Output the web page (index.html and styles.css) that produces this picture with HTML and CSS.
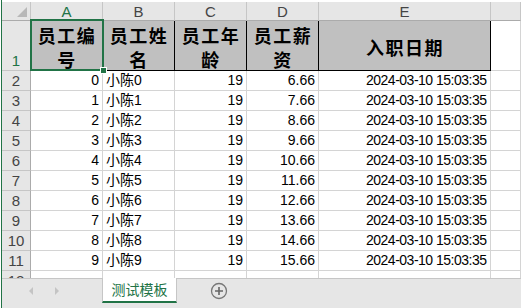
FILE: index.html
```html
<!DOCTYPE html>
<html lang="zh-CN">

<head>
    <meta charset="UTF-8">
    <meta name="viewport" content="width=device-width, initial-scale=1.0">
    <title>测试模板</title>

    <link rel="stylesheet" href="styles.css">
</head>

<body>

    <div class="app">
        <div class="sheet">
            <div class="corner"><span class="tri"></span></div>
            <div class="colhead active">A</div>
            <div class="colhead">B</div>
            <div class="colhead">C</div>
            <div class="colhead">D</div>
            <div class="colhead">E</div>
            <div class="colhead"></div>

            <div class="rowhead active bottom">1</div>
            <div class="cell title">员工编号</div>
            <div class="cell title">员工姓名</div>
            <div class="cell title">员工年龄</div>
            <div class="cell title">员工薪资</div>
            <div class="cell title single">入职日期</div>
            <div class="cell"></div>

            <div class="rowhead">2</div>
            <div class="cell num">0</div><div class="cell">小陈0</div><div class="cell num">19</div><div class="cell num">6.66</div><div class="cell num date">2024-03-10 15:03:35</div><div class="cell"></div>
            <div class="rowhead">3</div>
            <div class="cell num">1</div><div class="cell">小陈1</div><div class="cell num">19</div><div class="cell num">7.66</div><div class="cell num date">2024-03-10 15:03:35</div><div class="cell"></div>
            <div class="rowhead">4</div>
            <div class="cell num">2</div><div class="cell">小陈2</div><div class="cell num">19</div><div class="cell num">8.66</div><div class="cell num date">2024-03-10 15:03:35</div><div class="cell"></div>
            <div class="rowhead">5</div>
            <div class="cell num">3</div><div class="cell">小陈3</div><div class="cell num">19</div><div class="cell num">9.66</div><div class="cell num date">2024-03-10 15:03:35</div><div class="cell"></div>
            <div class="rowhead">6</div>
            <div class="cell num">4</div><div class="cell">小陈4</div><div class="cell num">19</div><div class="cell num">10.66</div><div class="cell num date">2024-03-10 15:03:35</div><div class="cell"></div>
            <div class="rowhead">7</div>
            <div class="cell num">5</div><div class="cell">小陈5</div><div class="cell num">19</div><div class="cell num">11.66</div><div class="cell num date">2024-03-10 15:03:35</div><div class="cell"></div>
            <div class="rowhead">8</div>
            <div class="cell num">6</div><div class="cell">小陈6</div><div class="cell num">19</div><div class="cell num">12.66</div><div class="cell num date">2024-03-10 15:03:35</div><div class="cell"></div>
            <div class="rowhead">9</div>
            <div class="cell num">7</div><div class="cell">小陈7</div><div class="cell num">19</div><div class="cell num">13.66</div><div class="cell num date">2024-03-10 15:03:35</div><div class="cell"></div>
            <div class="rowhead">10</div>
            <div class="cell num">8</div><div class="cell">小陈8</div><div class="cell num">19</div><div class="cell num">14.66</div><div class="cell num date">2024-03-10 15:03:35</div><div class="cell"></div>
            <div class="rowhead">11</div>
            <div class="cell num">9</div><div class="cell">小陈9</div><div class="cell num">19</div><div class="cell num">15.66</div><div class="cell num date">2024-03-10 15:03:35</div><div class="cell"></div>
            <div class="rowhead">12</div>
            <div class="cell"></div><div class="cell"></div><div class="cell"></div><div class="cell"></div><div class="cell"></div><div class="cell"></div>

            <div class="selection"><span class="handle"></span></div>
        </div>

        <div class="tabbar">
            <div class="nav">
                <span class="arrow left"></span>
                <span class="arrow right"></span>
            </div>
            <div class="tab">测试模板</div>
            <div class="add">
                <svg width="18" height="18" viewBox="0 0 18 18">
                    <circle cx="9" cy="9" r="7.5" fill="none" stroke="#777" stroke-width="1.3" />
                    <path d="M9 5v8M5 9h8" stroke="#666" stroke-width="1.6" />
                </svg>
            </div>
        </div>
    </div>

</body>

</html>
```

FILE: styles.css
```css
body {
    margin: 0;
    background: #fff;
    font-family: "Liberation Sans Narrow", "Liberation Sans", "Noto Sans CJK SC", sans-serif;
    overflow: hidden;
}

.app {
    margin-left: 1px;
    border-left: 1px solid #217346;
    height: 308px;
}

.sheet {
    position: relative;
    display: grid;
    grid-template-columns: 29px 72px 72px 72px 72px 172px 1fr;
    grid-template-rows: 19px 50px repeat(11, 20px);
    padding-top: 2px;
    height: 278px;
    box-sizing: border-box;
    overflow: hidden;
}

.corner,
.colhead,
.rowhead {
    background: #e6e6e6;
    box-sizing: border-box;
    color: #444;
}

.corner {
    position: relative;
    border-right: 1px solid #c6c6c6;
    border-bottom: 1px solid #ababab;
}

.tri {
    position: absolute;
    right: 3px;
    bottom: 3px;
    width: 0;
    height: 0;
    border-left: 10px solid transparent;
    border-bottom: 10px solid #b8b8b8;
}

.colhead {
    display: flex;
    align-items: center;
    justify-content: center;
    font-size: 15px;
    border-right: 1px solid #c6c6c6;
    border-bottom: 1px solid #ababab;
}

.rowhead {
    display: flex;
    align-items: center;
    justify-content: center;
    font-size: 15px;
    border-right: 1px solid #ababab;
    border-bottom: 1px solid #c6c6c6;
}

.rowhead.bottom {
    align-items: flex-end;
    padding-bottom: 1px;
}

.colhead.active,
.rowhead.active {
    color: #217346;
}

.cell {
    box-sizing: border-box;
    border-right: 1px solid #d4d4d4;
    border-bottom: 1px solid #d4d4d4;
    font-size: 14px;
    line-height: 19px;
    padding: 0 3px;
    white-space: nowrap;
    color: #000;
    font-family: "Liberation Sans Narrow", "Liberation Sans", "Noto Sans CJK SC", sans-serif;
}

.cell.num {
    text-align: right;
}

.cell.date {
    letter-spacing: -0.5px;
    padding-right: 3.5px;
}

.cell.title {
    background: #c0c0c0;
    border-right: 1px solid #000;
    border-bottom: 1px solid #000;
    font-family: "Noto Sans CJK SC", sans-serif;
    font-weight: bold;
    font-size: 18px;
    letter-spacing: 1.5px;
    line-height: 24px;
    padding: 2px 0 0 1px;
    text-align: center;
    white-space: normal;
}

.cell.single {
    display: flex;
    align-items: center;
    justify-content: center;
}

.selection {
    position: absolute;
    left: 28px;
    top: 19px;
    width: 74px;
    height: 52px;
    box-sizing: border-box;
    border: 2px solid #217346;
}

.handle {
    position: absolute;
    right: -5px;
    bottom: -5px;
    width: 5px;
    height: 5px;
    background: #217346;
    border: 1px solid #fff;
}

.tabbar {
    display: flex;
    align-items: flex-start;
    height: 30px;
    background: #e6e6e6;
    border-top: 1px solid #c6c6c6;
    box-sizing: border-box;
}

.nav {
    width: 100px;
    height: 24px;
    display: flex;
    align-items: center;
    gap: 22px;
    padding-left: 27px;
    box-sizing: border-box;
}

.arrow {
    width: 0;
    height: 0;
    border-top: 4px solid transparent;
    border-bottom: 4px solid transparent;
}

.arrow.left {
    border-right: 4px solid #c4c4c4;
}

.arrow.right {
    border-left: 4px solid #c4c4c4;
}

.tab {
    margin-top: -1px;
    width: 75px;
    height: 25px;
    box-sizing: border-box;
    background: #fff;
    border-left: 1px solid #c6c6c6;
    border-right: 1px solid #c6c6c6;
    border-bottom: 2px solid #217346;
    color: #217346;
    font-family: "Noto Sans CJK SC", sans-serif;
    font-size: 14px;
    line-height: 22px;
    text-align: center;
}

.add {
    margin-left: 33px;
    margin-top: 3px;
    display: flex;
}
```
